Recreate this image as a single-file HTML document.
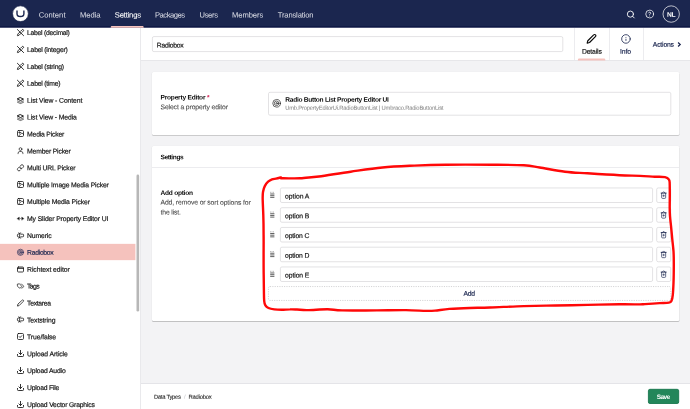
<!DOCTYPE html>
<html lang="en">
<head>
<meta charset="utf-8">
<title>Radiobox - Data Types - Umbraco</title>
<style>
*{box-sizing:border-box;margin:0;padding:0}
html,body{width:690px;height:409px;overflow:hidden;background:#f3f3f5}
body{position:relative;font-family:"Liberation Sans",Arial,sans-serif;font-size:7px;color:#1a1a1a;line-height:1}
.abs,.ic,.t{position:absolute}
.t{white-space:nowrap;line-height:10px;height:10px;filter:opacity(1);transform-origin:0 50%;-webkit-text-stroke:.18px;color:#141414}
.ic{display:block;overflow:visible}
#hdr{left:0;top:0;width:690px;height:28px;background:linear-gradient(#1b264f,#1b264f 26px,#0f1945 26px,#0f1945 27px,#4d5375 27px,#4d5375)}
.nav{color:#d9dbe4;-webkit-text-stroke:.05px}
.nav.on{color:#fff;-webkit-text-stroke:.08px}
#side{left:0;top:27.5px;width:140.5px;height:381.5px;background:#fff}
#sideb{left:140px;top:27.5px;width:1px;height:381.5px;background:#e9e9ec}
.lbl.sel{color:#1b264f}
#ehdr{left:141px;top:27.5px;width:549px;height:33px;background:#fff;border-bottom:1px solid #e7e7ea}
.box{background:#fff;border-radius:1.5px;box-shadow:0 .5px .8px rgba(0,0,0,.25)}
.b{font-weight:700;-webkit-text-stroke:0;color:#0c0c0c}
.d{-webkit-text-stroke:.06px;color:#444}
#ftr{left:141px;top:383px;width:549px;height:26px;background:#fff;border-top:1px solid #e4e4e8}
</style>
</head>
<body>

<div id="hdr" class="abs"></div>
<div class="abs" style="left:0;top:0;width:1px;height:1px;mix-blend-mode:multiply"></div>
<svg class="ic" style="left:11px;top:4px;width:19px;height:19px" viewBox="11 4 19 19"><circle cx="20.450" cy="13.700" r="7.900" fill="#fff" stroke="#121c45" stroke-width=".7"/><path d="M17 10.400v3.300c0 2.100 1 2.800 3.450 2.800s3.450-.700 3.450-2.800v-3.300" fill="none" stroke="#1b264f" stroke-width="1.400"/></svg>
<div class="t nav" style="left:38px;top:10px;font-size:7.6px;letter-spacing:0.032px;transform:translate(0.70px,0.50px) rotate(.03deg)">Content</div>
<div class="t nav" style="left:80px;top:10px;font-size:7.6px;letter-spacing:-0.072px;transform:translate(0.00px,0.50px) rotate(.03deg)">Media</div>
<div class="t nav on" style="left:114px;top:10px;font-size:7.6px;letter-spacing:-0.172px;transform:translate(0.75px,0.50px) rotate(.03deg)">Settings</div>
<div class="t nav" style="left:155px;top:10px;font-size:7.6px;letter-spacing:-0.480px;transform:translate(0.00px,0.50px) rotate(.03deg)">Packages</div>
<div class="t nav" style="left:199px;top:10px;font-size:7.6px;letter-spacing:-0.336px;transform:translate(0.50px,0.50px) rotate(.03deg)">Users</div>
<div class="t nav" style="left:232px;top:10px;font-size:7.6px;letter-spacing:-0.068px;transform:translate(0.00px,0.50px) rotate(.03deg)">Members</div>
<div class="t nav" style="left:277px;top:10px;font-size:7.6px;letter-spacing:-0.155px;transform:translate(0.75px,0.50px) rotate(.03deg)">Translation</div>
<svg class="ic" style="left:109px;top:24px;width:37px;height:5px" viewBox="109 24 37 5"><path d="M110.700 27.800v-.500a1.200 1.200 0 0 1 1.200-1.200h30.600a1.200 1.200 0 0 1 1.200 1.200v.500z" fill="#f7c4be"/></svg>
<svg class="ic" style="left:626px;top:9px;width:11px;height:12px;color:#fff" viewBox="-0.522 -2.348 28.696 31.304" fill="none" stroke="currentColor" stroke-width="2.3" stroke-linecap="round" stroke-linejoin="round"><circle cx="11" cy="11" r="8"/><path d="M21 21l-4.300-4.300"/></svg>
<svg class="ic" style="left:645px;top:9px;width:11px;height:11px;color:#fff" viewBox="0.000 -1.032 28.387 28.387" fill="none" stroke="currentColor" stroke-width="2" stroke-linecap="round" stroke-linejoin="round"><circle cx="12" cy="12" r="10"/><path d="M9.100 9a3 3 0 0 1 5.800 1c0 2-3 3-3 3"/><path d="M12 17h.010"/></svg>
<svg class="ic" style="left:661px;top:4px;width:20px;height:20px" viewBox="661 4 20 20"><circle cx="671.200" cy="14.050" r="8.200" fill="none" stroke="#e4e5ea" stroke-width=".8"/></svg>
<div class="t b" style="left:641px;width:60px;text-align:center;top:9px;font-size:6.7px;letter-spacing:-0.322px;color:#fff;transform:translate(0.09px,0.80px) rotate(.03deg)">NL</div>
<div id="side" class="abs"></div><div id="sideb" class="abs"></div>
<svg class="ic" style="left:16px;top:28px;width:10px;height:10px;color:#111" viewBox="-2.595 -2.919 32.432 32.432" fill="none" stroke="currentColor" stroke-width="2.8" stroke-linecap="round" stroke-linejoin="round"><path d="M10 10l-6.200 6.200a2 2 0 0 0-.500.800l-1.300 4.400a.500.500 0 0 0 .600.600l4.400-1.300a2 2 0 0 0 .800-.500L14 14"/><path d="M12.800 7.200l4.400-4.400a2.800 2.800 0 1 1 4 4l-4.400 4.400"/><path d="M2 2l20 20"/></svg>
<div class="t lbl" style="left:27px;top:28px;font-size:6.8px;letter-spacing:-0.262px;transform:translate(0.05px,0.10px) rotate(.03deg)">Label (decimal)</div>
<svg class="ic" style="left:16px;top:45px;width:10px;height:10px;color:#111" viewBox="-2.595 -2.595 32.432 32.432" fill="none" stroke="currentColor" stroke-width="2.8" stroke-linecap="round" stroke-linejoin="round"><path d="M10 10l-6.200 6.200a2 2 0 0 0-.500.800l-1.300 4.400a.500.500 0 0 0 .600.600l4.400-1.300a2 2 0 0 0 .800-.500L14 14"/><path d="M12.800 7.200l4.400-4.400a2.800 2.800 0 1 1 4 4l-4.400 4.400"/><path d="M2 2l20 20"/></svg>
<div class="t lbl" style="left:27px;top:44px;font-size:6.8px;letter-spacing:-0.223px;transform:translate(0.05px,1.00px) rotate(.03deg)">Label (integer)</div>
<svg class="ic" style="left:16px;top:62px;width:10px;height:10px;color:#111" viewBox="-2.595 -2.270 32.432 32.432" fill="none" stroke="currentColor" stroke-width="2.8" stroke-linecap="round" stroke-linejoin="round"><path d="M10 10l-6.200 6.200a2 2 0 0 0-.500.800l-1.300 4.400a.500.500 0 0 0 .600.600l4.400-1.300a2 2 0 0 0 .800-.500L14 14"/><path d="M12.800 7.200l4.400-4.400a2.800 2.800 0 1 1 4 4l-4.400 4.400"/><path d="M2 2l20 20"/></svg>
<div class="t lbl" style="left:27px;top:61px;font-size:6.8px;letter-spacing:-0.206px;transform:translate(0.05px,0.90px) rotate(.03deg)">Label (string)</div>
<svg class="ic" style="left:16px;top:79px;width:10px;height:9px;color:#111" viewBox="-2.595 -1.946 32.432 29.189" fill="none" stroke="currentColor" stroke-width="2.8" stroke-linecap="round" stroke-linejoin="round"><path d="M10 10l-6.200 6.200a2 2 0 0 0-.500.800l-1.300 4.400a.500.500 0 0 0 .600.600l4.400-1.300a2 2 0 0 0 .800-.500L14 14"/><path d="M12.800 7.200l4.400-4.400a2.800 2.800 0 1 1 4 4l-4.400 4.400"/><path d="M2 2l20 20"/></svg>
<div class="t lbl" style="left:27px;top:78px;font-size:6.8px;letter-spacing:-0.226px;transform:translate(0.05px,0.80px) rotate(.03deg)">Label (time)</div>
<svg class="ic" style="left:17px;top:97px;width:7px;height:7px;color:#111" viewBox="0 0 7 7" fill="none" stroke="currentColor" stroke-width="0.7" stroke-linecap="round" stroke-linejoin="round"><path d="M3.500 .700l3 1.400-3 1.400-3-1.400z" stroke-width=".95"/><path d="M.500 3.900l3 1.250 3-1.250" stroke-width=".6"/><path d="M.500 5.300l3 1.250 3-1.250" stroke-width=".6"/></svg>
<div class="t lbl" style="left:27px;top:95px;font-size:6.8px;letter-spacing:-0.090px;transform:translate(0.05px,0.70px) rotate(.03deg)">List View - Content</div>
<svg class="ic" style="left:17px;top:114px;width:7px;height:7px;color:#111" viewBox="0 0 7 7" fill="none" stroke="currentColor" stroke-width="0.7" stroke-linecap="round" stroke-linejoin="round"><path d="M3.500 .700l3 1.400-3 1.400-3-1.400z" stroke-width=".95"/><path d="M.500 3.900l3 1.250 3-1.250" stroke-width=".6"/><path d="M.500 5.300l3 1.250 3-1.250" stroke-width=".6"/></svg>
<div class="t lbl" style="left:27px;top:112px;font-size:6.8px;letter-spacing:-0.115px;transform:translate(0.05px,0.60px) rotate(.03deg)">List View - Media</div>
<svg class="ic" style="left:17px;top:130px;width:7px;height:7px;color:#111" viewBox="0 0 7 7" fill="none" stroke="currentColor" stroke-width="0.8" stroke-linecap="round" stroke-linejoin="round"><rect x=".5" y=".5" width="6" height="6" rx="1.100"/><circle cx="2.500" cy="2.500" r=".650"/><path d="M6.500 4.500L5.300 3.300a.700.700 0 0 0-1 0L1.400 6.300"/></svg>
<div class="t lbl" style="left:27px;top:129px;font-size:6.8px;letter-spacing:-0.182px;transform:translate(0.05px,0.50px) rotate(.03deg)">Media Picker</div>
<svg class="ic" style="left:17px;top:147px;width:7px;height:7px;color:#111" viewBox="0 0 7 7" fill="none" stroke="currentColor" stroke-width="0.68" stroke-linecap="round" stroke-linejoin="round"><circle cx="3.500" cy="2.100" r="1.400"/><path d="M1.100 6.700v-.500a1.700 1.700 0 0 1 1.700-1.700h1.400a1.700 1.700 0 0 1 1.700 1.700v.500"/></svg>
<div class="t lbl" style="left:27px;top:146px;font-size:6.8px;letter-spacing:-0.167px;transform:translate(0.05px,0.40px) rotate(.03deg)">Member Picker</div>
<svg class="ic" style="left:16px;top:164px;width:10px;height:9px;color:#111" viewBox="-2.595 -0.324 32.432 29.189" fill="none" stroke="currentColor" stroke-width="2.4" stroke-linecap="round" stroke-linejoin="round"><path d="M10 13a5 5 0 0 0 7.540.540l3-3a5 5 0 0 0-7.070-7.070l-1.720 1.710"/><path d="M14 11a5 5 0 0 0-7.540-.540l-3 3a5 5 0 0 0 7.070 7.070l1.710-1.710"/></svg>
<div class="t lbl" style="left:27px;top:163px;font-size:6.8px;letter-spacing:-0.124px;transform:translate(0.05px,0.30px) rotate(.03deg)">Multi URL Picker</div>
<svg class="ic" style="left:17px;top:181px;width:7px;height:7px;color:#111" viewBox="0 0 7 7" fill="none" stroke="currentColor" stroke-width="0.8" stroke-linecap="round" stroke-linejoin="round"><rect x=".5" y=".5" width="6" height="6" rx="1.100"/><circle cx="2.500" cy="2.500" r=".650"/><path d="M6.500 4.500L5.300 3.300a.700.700 0 0 0-1 0L1.400 6.300"/></svg>
<div class="t lbl" style="left:27px;top:180px;font-size:6.8px;letter-spacing:-0.138px;transform:translate(0.05px,0.20px) rotate(.03deg)">Multiple Image Media Picker</div>
<svg class="ic" style="left:17px;top:198px;width:7px;height:7px;color:#111" viewBox="0 0 7 7" fill="none" stroke="currentColor" stroke-width="0.8" stroke-linecap="round" stroke-linejoin="round"><rect x=".5" y=".5" width="6" height="6" rx="1.100"/><circle cx="2.500" cy="2.500" r=".650"/><path d="M6.500 4.500L5.300 3.300a.700.700 0 0 0-1 0L1.400 6.300"/></svg>
<div class="t lbl" style="left:27px;top:197px;font-size:6.8px;letter-spacing:-0.080px;transform:translate(0.05px,0.10px) rotate(.03deg)">Multiple Media Picker</div>
<svg class="ic" style="left:17px;top:215px;width:7px;height:7px;color:#111" viewBox="0 0 7 7" fill="none" stroke="currentColor" stroke-width="0.8" stroke-linecap="round" stroke-linejoin="round"><path d="M.200 3.500l2.100-1.400v2.800z" fill="currentColor" stroke-width=".3"/><path d="M6.800 3.500L4.700 2.100v2.800z" fill="currentColor" stroke-width=".3"/><path d="M2.900 3.500h1.200" stroke-dasharray=".45 .45" stroke-linecap="butt"/></svg>
<div class="t lbl" style="left:27px;top:214px;font-size:6.8px;letter-spacing:-0.109px;transform:translate(0.05px,0.00px) rotate(.03deg)">My Slider Property Editor UI</div>
<svg class="ic" style="left:17px;top:232px;width:7px;height:7px;color:#111" viewBox="0 0 7 7" fill="none" stroke="currentColor" stroke-width="0.75" stroke-linecap="round" stroke-linejoin="round"><path d="M1.400 1h.300a.900.900 0 0 1 .900.900.900.900 0 0 1 .900-.900h.300"/><path d="M3.800 6h-.300a.900.900 0 0 1-.900-.900.900.900 0 0 1-.900.900h-.300"/><path d="M1.400 4.800h-.300a.700.700 0 0 1-.700-.700V2.900a.700.700 0 0 1 .700-.700h.300"/><path d="M3.800 2.200h2.100a.700.700 0 0 1 .700.700v1.200a.700.700 0 0 1-.700.700H3.800"/><path d="M2.600 1.900v3.200"/></svg>
<div class="t lbl" style="left:27px;top:230px;font-size:6.8px;letter-spacing:-0.135px;transform:translate(0.05px,0.90px) rotate(.03deg)">Numeric</div>
<svg class="ic" style="left:0;top:242px;width:136px;height:20px" viewBox="0 242 136 20"><rect x="0" y="243.85" width="135.4" height="16.3" fill="#f5c2bd"/></svg>
<svg class="ic" style="left:16px;top:248px;width:10px;height:9px;color:#2b3159" viewBox="-2.595 -1.946 32.432 29.189" fill="none" stroke="currentColor" stroke-width="2.4" stroke-linecap="round" stroke-linejoin="round"><circle cx="12" cy="12" r="10"/><circle cx="12" cy="12" r="6"/><circle cx="12" cy="12" r="2"/></svg>
<div class="t lbl sel" style="left:27px;top:247px;font-size:6.8px;letter-spacing:-0.288px;transform:translate(0.05px,0.80px) rotate(.03deg)">Radiobox</div>
<svg class="ic" style="left:17px;top:266px;width:7px;height:7px;color:#111" viewBox="0 0 7 7" fill="none" stroke="currentColor" stroke-width="0.8" stroke-linecap="round" stroke-linejoin="round"><rect x=".5" y="1" width="6" height="5" rx=".900"/><path d="M.600 2.200h5.800" stroke-width="1.100"/></svg>
<div class="t lbl" style="left:27px;top:264px;font-size:6.8px;letter-spacing:-0.047px;transform:translate(0.05px,0.70px) rotate(.03deg)">Richtext editor</div>
<svg class="ic" style="left:16px;top:282px;width:10px;height:9px;color:#111" viewBox="-2.595 -1.297 32.432 29.189" fill="none" stroke="currentColor" stroke-width="2.4" stroke-linecap="round" stroke-linejoin="round"><path d="M15 5l6.300 6.300a2.400 2.400 0 0 1 0 3.400L17 19"/><path d="M9.600 5.600A2 2 0 0 0 8.200 5H3a1 1 0 0 0-1 1v5.200a2 2 0 0 0 .600 1.400l5.700 5.700a2.400 2.400 0 0 0 3.400 0l3.600-3.600a2.400 2.400 0 0 0 0-3.400z"/></svg>
<div class="t lbl" style="left:27px;top:281px;font-size:6.8px;letter-spacing:-0.620px;transform:translate(0.05px,0.60px) rotate(.03deg)">Tags</div>
<svg class="ic" style="left:16px;top:299px;width:10px;height:9px;color:#111" viewBox="-2.595 -0.973 32.432 29.189" fill="none" stroke="currentColor" stroke-width="2.4" stroke-linecap="round" stroke-linejoin="round"><path d="M17 3a2.850 2.830 0 1 1 4 4L7.500 20.500 2 22l1.500-5.500z"/></svg>
<div class="t lbl" style="left:27px;top:298px;font-size:6.8px;letter-spacing:-0.297px;transform:translate(0.05px,0.50px) rotate(.03deg)">Textarea</div>
<svg class="ic" style="left:17px;top:316px;width:7px;height:7px;color:#111" viewBox="0 0 7 7" fill="none" stroke="currentColor" stroke-width="0.75" stroke-linecap="round" stroke-linejoin="round"><path d="M1.400 1h.300a.900.900 0 0 1 .900.900.900.900 0 0 1 .900-.900h.300"/><path d="M3.800 6h-.300a.900.900 0 0 1-.900-.900.900.900 0 0 1-.900.900h-.300"/><path d="M1.400 4.800h-.300a.700.700 0 0 1-.700-.700V2.900a.700.700 0 0 1 .700-.700h.300"/><path d="M3.800 2.200h2.100a.700.700 0 0 1 .700.700v1.200a.700.700 0 0 1-.700.700H3.800"/><path d="M2.600 1.900v3.200"/></svg>
<div class="t lbl" style="left:27px;top:315px;font-size:6.8px;letter-spacing:-0.077px;transform:translate(0.05px,0.40px) rotate(.03deg)">Textstring</div>
<svg class="ic" style="left:17px;top:333px;width:7px;height:7px;color:#111" viewBox="0 0 7 7" fill="none" stroke="currentColor" stroke-width="0.8" stroke-linecap="round" stroke-linejoin="round"><rect x=".5" y=".5" width="6" height="6" rx="1.100"/><path d="M2.200 3.600l.900.900 1.700-1.800"/></svg>
<div class="t lbl" style="left:27px;top:332px;font-size:6.8px;letter-spacing:-0.097px;transform:translate(0.05px,0.30px) rotate(.03deg)">True/false</div>
<svg class="ic" style="left:17px;top:350px;width:7px;height:7px;color:#111" viewBox="0 0 7 7" fill="none" stroke="currentColor" stroke-width="0.85" stroke-linecap="round" stroke-linejoin="round"><path d="M.500 4.400v1.300a.800.800 0 0 0 .800.800h4.400a.800.800 0 0 0 .800-.800V4.400"/><path d="M1.900 2.900l1.600 1.600 1.600-1.600"/><path d="M3.500 4.400V.400"/></svg>
<div class="t lbl" style="left:27px;top:349px;font-size:6.8px;letter-spacing:-0.091px;transform:translate(0.05px,0.20px) rotate(.03deg)">Upload Article</div>
<svg class="ic" style="left:17px;top:367px;width:7px;height:7px;color:#111" viewBox="0 0 7 7" fill="none" stroke="currentColor" stroke-width="0.85" stroke-linecap="round" stroke-linejoin="round"><path d="M.500 4.400v1.300a.800.800 0 0 0 .800.800h4.400a.800.800 0 0 0 .800-.800V4.400"/><path d="M1.900 2.900l1.600 1.600 1.600-1.600"/><path d="M3.500 4.400V.400"/></svg>
<div class="t lbl" style="left:27px;top:366px;font-size:6.8px;letter-spacing:-0.158px;transform:translate(0.05px,0.10px) rotate(.03deg)">Upload Audio</div>
<svg class="ic" style="left:17px;top:384px;width:7px;height:7px;color:#111" viewBox="0 0 7 7" fill="none" stroke="currentColor" stroke-width="0.85" stroke-linecap="round" stroke-linejoin="round"><path d="M.500 4.400v1.300a.800.800 0 0 0 .800.800h4.400a.800.800 0 0 0 .800-.800V4.400"/><path d="M1.900 2.900l1.600 1.600 1.600-1.600"/><path d="M3.500 4.400V.400"/></svg>
<div class="t lbl" style="left:27px;top:383px;font-size:6.8px;letter-spacing:-0.219px;transform:translate(0.05px,0.00px) rotate(.03deg)">Upload File</div>
<svg class="ic" style="left:17px;top:401px;width:7px;height:7px;color:#111" viewBox="0 0 7 7" fill="none" stroke="currentColor" stroke-width="0.85" stroke-linecap="round" stroke-linejoin="round"><path d="M.500 4.400v1.300a.800.800 0 0 0 .800.800h4.400a.800.800 0 0 0 .800-.800V4.400"/><path d="M1.900 2.900l1.600 1.600 1.600-1.600"/><path d="M3.500 4.400V.400"/></svg>
<div class="t lbl" style="left:27px;top:399px;font-size:6.8px;letter-spacing:-0.190px;transform:translate(0.05px,0.90px) rotate(.03deg)">Upload Vector Graphics</div>
<svg class="ic" style="left:135px;top:173px;width:6px;height:141px" viewBox="135 173 6 141"><rect x="136.500" y="174.600" width="2.650" height="137" rx="1.300" fill="#b7b7b7"/></svg>
<div id="ehdr" class="abs"></div>
<svg class="ic" style="left:151px;top:35px;width:414px;height:18px" viewBox="151 35 414 18"><rect x="152.40" y="36.60" width="410.40" height="15.00" rx="1.5" fill="#fff" stroke="#d0cfd2" stroke-width="0.6"/></svg>
<div class="t" style="left:156px;top:40px;font-size:6.8px;letter-spacing:-0.274px;transform:translate(0.80px,0.40px) rotate(.03deg)">Radiobox</div>
<div class="abs" style="left:574px;top:27.500px;width:1px;height:32.500px;background:#ececef"></div>
<div class="abs" style="left:609px;top:27.500px;width:1px;height:32.500px;background:#ececef"></div>
<div class="abs" style="left:643px;top:27.500px;width:1px;height:32.500px;background:#ececef"></div>
<svg class="ic" style="left:586px;top:33px;width:12px;height:13px;color:#0a0a0a" viewBox="-0.692 -1.385 27.692 30.000" fill="none" stroke="currentColor" stroke-width="2.7" stroke-linecap="round" stroke-linejoin="round"><path d="M17 3a2.850 2.830 0 1 1 4 4L7.500 20.500 2 22l1.500-5.500z"/></svg>
<div class="t" style="left:561px;width:60px;text-align:center;top:46px;font-size:6.8px;letter-spacing:-0.164px;transform:translate(0.82px,0.65px) rotate(.03deg)">Details</div>
<svg class="ic" style="left:576px;top:56px;width:32px;height:6px" viewBox="576 56 32 6"><path d="M577.900 60.500v-.700a1.200 1.200 0 0 1 1.200-1.200h25a1.200 1.200 0 0 1 1.200 1.200v.700z" fill="#f5c1bc"/></svg>
<svg class="ic" style="left:620px;top:33px;width:13px;height:13px;color:#1b264f" viewBox="-1.864 -1.864 30.291 30.291" fill="none" stroke="currentColor" stroke-width="1.9" stroke-linecap="round" stroke-linejoin="round"><circle cx="12" cy="12" r="10"/><path d="M12 15.500v-3"/><path d="M12 8.500h.010"/></svg>
<div class="t" style="left:595px;width:60px;text-align:center;top:46px;font-size:6.8px;letter-spacing:-0.148px;color:#1b264f;transform:translate(0.48px,0.65px) rotate(.03deg)">Info</div>
<div class="t" style="left:652px;top:39px;font-size:6.8px;letter-spacing:-0.183px;color:#1b264f;transform:translate(0.80px,0.70px) rotate(.03deg)">Actions</div>
<svg class="ic" style="left:676px;top:41px;width:6px;height:8px" viewBox="676 41 6 8" fill="none" stroke="#1b264f" stroke-width="1.250"><path d="M678.100 42.500l2.100 2-2.100 2"/></svg>
<svg class="ic" style="left:149px;top:69px;width:534px;height:70px" viewBox="149 69 534 70"><rect x="151.50" y="71.80" width="528.40" height="64.10" rx="2.0" fill="#000" fill-opacity=".045"/><rect x="152.00" y="72.90" width="527.40" height="62.90" rx="1.5" fill="#000" fill-opacity=".17"/><rect x="152.00" y="72.00" width="527.40" height="62.90" rx="1.5" fill="#fff"/></svg>
<div class="t b" style="left:160px;top:92px;font-size:6.6px;letter-spacing:-0.214px;transform:translate(0.50px,0.50px) rotate(.03deg)">Property Editor <span style="color:#d42054">*</span></div>
<div class="t d" style="left:160px;top:102px;font-size:6.8px;letter-spacing:-0.121px;transform:translate(0.50px,0.30px) rotate(.03deg)">Select a property editor</div>
<svg class="ic" style="left:267px;top:91px;width:406px;height:26px" viewBox="267 91 406 26"><rect x="268.50" y="92.30" width="402.30" height="22.90" rx="1.5" fill="#fff" stroke="#d0cfd2" stroke-width="0.6"/></svg>
<svg class="ic" style="left:272px;top:98px;width:11px;height:11px;color:#1a1a1a" viewBox="0.000 -1.826 28.696 28.696" fill="none" stroke="currentColor" stroke-width="1.7" stroke-linecap="round" stroke-linejoin="round"><circle cx="12" cy="12" r="10"/><circle cx="12" cy="12" r="6"/><circle cx="12" cy="12" r="2"/></svg>
<div class="t b" style="left:285px;top:94px;font-size:6.6px;letter-spacing:-0.277px;transform:translate(0.30px,0.70px) rotate(.03deg)">Radio Button List Property Editor UI</div>
<div class="t d" style="left:285px;top:102px;font-size:5.8px;letter-spacing:-0.187px;color:#8c8c8c;transform:translate(0.20px,0.70px) rotate(.03deg)">Umb.PropertyEditorUi.RadioButtonList | Umbraco.RadioButtonList</div>
<svg class="ic" style="left:149px;top:143px;width:534px;height:182px" viewBox="149 143 534 182"><rect x="151.50" y="145.80" width="528.40" height="176.20" rx="2.0" fill="#000" fill-opacity=".045"/><rect x="152.00" y="146.90" width="527.40" height="175.00" rx="1.5" fill="#000" fill-opacity=".17"/><rect x="152.00" y="146.00" width="527.40" height="175.00" rx="1.5" fill="#fff"/></svg>
<div class="t b" style="left:160px;top:152px;font-size:6.6px;letter-spacing:-0.388px;transform:translate(0.40px,0.30px) rotate(.03deg)">Settings</div>
<div class="abs" style="left:152px;top:167px;width:527.300px;height:1px;background:#ececef"></div>
<div class="t b" style="left:160px;top:187px;font-size:6.6px;letter-spacing:-0.255px;transform:translate(0.50px,0.90px) rotate(.03deg)">Add option</div>
<div class="t d" style="left:160px;top:197px;font-size:6.8px;letter-spacing:-0.104px;transform:translate(0.50px,0.60px) rotate(.03deg)">Add, remove or sort options for</div>
<div class="t d" style="left:160px;top:207px;font-size:6.8px;letter-spacing:-0.131px;transform:translate(0.50px,0.40px) rotate(.03deg)">the list.</div>
<svg class="ic" style="left:270px;top:191px;width:6px;height:7px;color:#333" viewBox="-0.381 -1.810 11.429 13.333" fill="none" stroke="currentColor" stroke-width="1.5" stroke-linejoin="round" stroke-linecap="butt"><path d="M0 .700h8" stroke-dasharray="1.600 1.100" stroke-opacity=".55"/><path d="M0 3.900h8M0 7.100h8M0 10.300h8"/></svg>
<svg class="ic" style="left:279px;top:186px;width:375px;height:18px" viewBox="279 186 375 18"><rect x="280.40" y="187.95" width="372.20" height="14.55" rx="1.5" fill="#fff" stroke="#d0cfd2" stroke-width="0.6"/></svg>
<div class="t" style="left:285px;top:191px;font-size:6.8px;letter-spacing:-0.040px;transform:translate(0.10px,0.40px) rotate(.03deg)">option A</div>
<svg class="ic" style="left:655px;top:186px;width:17px;height:18px" viewBox="655 186 17 18"><rect x="656.70" y="187.95" width="14.00" height="14.55" rx="1.5" fill="#fff" stroke="#d0cfd2" stroke-width="0.6"/></svg>
<svg class="ic" style="left:660px;top:191px;width:9px;height:8px;color:#1b264f" viewBox="-0.150 -0.000 9.000 8.000" fill="none" stroke="currentColor" stroke-width="0.68" stroke-linecap="round" stroke-linejoin="round"><path d="M1 2.100h5" stroke-width=".9"/><path d="M5.500 2.300v4.200a.900.900 0 0 1-.900.900H2.400a.900.900 0 0 1-.900-.900V2.300"/><path d="M2.300 1.900L3.500 .700l1.200 1.200"/><path d="M2.700 4.700h1.600M3.500 3.900v1.600" stroke-width=".6"/></svg>
<svg class="ic" style="left:270px;top:211px;width:6px;height:6px;color:#333" viewBox="-0.381 -1.333 11.429 11.429" fill="none" stroke="currentColor" stroke-width="1.5" stroke-linejoin="round" stroke-linecap="butt"><path d="M0 .700h8" stroke-dasharray="1.600 1.100" stroke-opacity=".55"/><path d="M0 3.900h8M0 7.100h8M0 10.300h8"/></svg>
<svg class="ic" style="left:279px;top:206px;width:375px;height:18px" viewBox="279 206 375 18"><rect x="280.40" y="207.70" width="372.20" height="14.55" rx="1.5" fill="#fff" stroke="#d0cfd2" stroke-width="0.6"/></svg>
<div class="t" style="left:285px;top:211px;font-size:6.8px;letter-spacing:-0.093px;transform:translate(0.10px,0.15px) rotate(.03deg)">option B</div>
<svg class="ic" style="left:655px;top:206px;width:17px;height:18px" viewBox="655 206 17 18"><rect x="656.70" y="207.70" width="14.00" height="14.55" rx="1.5" fill="#fff" stroke="#d0cfd2" stroke-width="0.6"/></svg>
<svg class="ic" style="left:660px;top:210px;width:9px;height:9px;color:#1b264f" viewBox="-0.150 -0.750 9.000 9.000" fill="none" stroke="currentColor" stroke-width="0.68" stroke-linecap="round" stroke-linejoin="round"><path d="M1 2.100h5" stroke-width=".9"/><path d="M5.500 2.300v4.200a.900.900 0 0 1-.900.900H2.400a.900.900 0 0 1-.900-.900V2.300"/><path d="M2.300 1.900L3.500 .700l1.200 1.200"/><path d="M2.700 4.700h1.600M3.500 3.900v1.600" stroke-width=".6"/></svg>
<svg class="ic" style="left:270px;top:231px;width:6px;height:6px;color:#333" viewBox="-0.381 -0.857 11.429 11.429" fill="none" stroke="currentColor" stroke-width="1.5" stroke-linejoin="round" stroke-linecap="butt"><path d="M0 .700h8" stroke-dasharray="1.600 1.100" stroke-opacity=".55"/><path d="M0 3.900h8M0 7.100h8M0 10.300h8"/></svg>
<svg class="ic" style="left:279px;top:226px;width:375px;height:18px" viewBox="279 226 375 18"><rect x="280.40" y="227.45" width="372.20" height="14.55" rx="1.5" fill="#fff" stroke="#d0cfd2" stroke-width="0.6"/></svg>
<div class="t" style="left:285px;top:230px;font-size:6.8px;letter-spacing:-0.147px;transform:translate(0.10px,0.90px) rotate(.03deg)">option C</div>
<svg class="ic" style="left:655px;top:226px;width:17px;height:18px" viewBox="655 226 17 18"><rect x="656.70" y="227.45" width="14.00" height="14.55" rx="1.5" fill="#fff" stroke="#d0cfd2" stroke-width="0.6"/></svg>
<svg class="ic" style="left:660px;top:230px;width:9px;height:9px;color:#1b264f" viewBox="-0.150 -0.500 9.000 9.000" fill="none" stroke="currentColor" stroke-width="0.68" stroke-linecap="round" stroke-linejoin="round"><path d="M1 2.100h5" stroke-width=".9"/><path d="M5.500 2.300v4.200a.900.900 0 0 1-.900.900H2.400a.900.900 0 0 1-.900-.900V2.300"/><path d="M2.300 1.900L3.500 .700l1.200 1.200"/><path d="M2.700 4.700h1.600M3.500 3.900v1.600" stroke-width=".6"/></svg>
<svg class="ic" style="left:270px;top:251px;width:6px;height:6px;color:#333" viewBox="-0.381 -0.381 11.429 11.429" fill="none" stroke="currentColor" stroke-width="1.5" stroke-linejoin="round" stroke-linecap="butt"><path d="M0 .700h8" stroke-dasharray="1.600 1.100" stroke-opacity=".55"/><path d="M0 3.900h8M0 7.100h8M0 10.300h8"/></svg>
<svg class="ic" style="left:279px;top:245px;width:375px;height:19px" viewBox="279 245 375 19"><rect x="280.40" y="247.20" width="372.20" height="14.55" rx="1.5" fill="#fff" stroke="#d0cfd2" stroke-width="0.6"/></svg>
<div class="t" style="left:285px;top:250px;font-size:6.8px;letter-spacing:-0.147px;transform:translate(0.10px,0.65px) rotate(.03deg)">option D</div>
<svg class="ic" style="left:655px;top:245px;width:17px;height:19px" viewBox="655 245 17 19"><rect x="656.70" y="247.20" width="14.00" height="14.55" rx="1.5" fill="#fff" stroke="#d0cfd2" stroke-width="0.6"/></svg>
<svg class="ic" style="left:660px;top:250px;width:9px;height:9px;color:#1b264f" viewBox="-0.150 -0.250 9.000 9.000" fill="none" stroke="currentColor" stroke-width="0.68" stroke-linecap="round" stroke-linejoin="round"><path d="M1 2.100h5" stroke-width=".9"/><path d="M5.500 2.300v4.200a.900.900 0 0 1-.900.900H2.400a.900.900 0 0 1-.900-.900V2.300"/><path d="M2.300 1.900L3.500 .700l1.200 1.200"/><path d="M2.700 4.700h1.600M3.500 3.900v1.600" stroke-width=".6"/></svg>
<svg class="ic" style="left:270px;top:270px;width:6px;height:7px;color:#333" viewBox="-0.381 -1.810 11.429 13.333" fill="none" stroke="currentColor" stroke-width="1.5" stroke-linejoin="round" stroke-linecap="butt"><path d="M0 .700h8" stroke-dasharray="1.600 1.100" stroke-opacity=".55"/><path d="M0 3.900h8M0 7.100h8M0 10.300h8"/></svg>
<svg class="ic" style="left:279px;top:265px;width:375px;height:18px" viewBox="279 265 375 18"><rect x="280.40" y="266.95" width="372.20" height="14.55" rx="1.5" fill="#fff" stroke="#d0cfd2" stroke-width="0.6"/></svg>
<div class="t" style="left:285px;top:270px;font-size:6.8px;letter-spacing:-0.093px;transform:translate(0.10px,0.40px) rotate(.03deg)">option E</div>
<svg class="ic" style="left:655px;top:265px;width:17px;height:18px" viewBox="655 265 17 18"><rect x="656.70" y="266.95" width="14.00" height="14.55" rx="1.5" fill="#fff" stroke="#d0cfd2" stroke-width="0.6"/></svg>
<svg class="ic" style="left:660px;top:270px;width:9px;height:8px;color:#1b264f" viewBox="-0.150 -0.000 9.000 8.000" fill="none" stroke="currentColor" stroke-width="0.68" stroke-linecap="round" stroke-linejoin="round"><path d="M1 2.100h5" stroke-width=".9"/><path d="M5.500 2.300v4.200a.900.900 0 0 1-.900.900H2.400a.900.900 0 0 1-.900-.900V2.300"/><path d="M2.300 1.900L3.500 .700l1.200 1.200"/><path d="M2.700 4.700h1.600M3.500 3.900v1.600" stroke-width=".6"/></svg>
<svg class="ic" style="left:267px;top:285px;width:405px;height:17px" viewBox="267 285 405 17"><rect x="268.45" y="286.55" width="402.30" height="13.90" rx="1.5" fill="#fff" stroke="#a9a9ad" stroke-width="0.5" stroke-dasharray="1.150 1.200"/></svg>
<div class="t" style="left:463px;top:288px;font-size:6.8px;letter-spacing:-0.247px;color:#1b264f;transform:translate(0.50px,0.80px) rotate(.03deg)">Add</div>
<svg class="ic" style="left:0;top:0;width:690px;height:409px" viewBox="0 0 690 409" fill="none" stroke="#ff0808" stroke-width="2.400" stroke-linecap="round" stroke-linejoin="round"><path d="M281 177.4C280.2 177.6 277.5 178.3 276 178.6C274.5 178.9 273.3 178.9 272 179.4C270.7 179.9 269.3 180.6 268.1 181.7C266.9 182.8 265.7 184.4 264.8 186.1C263.9 187.8 263.4 189.7 263 192C262.6 194.3 262.6 196.2 262.7 200C262.8 203.8 263.1 209.2 263.3 215C263.5 220.8 263.6 228.3 263.6 235C263.7 241.7 263.6 248.3 263.6 255C263.6 261.7 263.6 269.2 263.7 275C263.8 280.8 263.8 285.7 263.9 290C264.0 294.3 263.9 298.4 264.2 301C264.4 303.6 264.7 304.2 265.4 305.4C266.1 306.6 267.0 307.3 268.5 308C270.0 308.7 272.1 309.1 274.3 309.4C276.5 309.7 279.1 309.8 281.7 309.8C284.3 309.8 287.4 309.4 290 309.4C292.6 309.3 294.1 309.4 297 309.5C299.9 309.6 302.3 310.2 307.4 310.1C312.5 310.1 321.9 309.1 327.7 309.2C333.5 309.2 333.8 310.2 342 310.4C350.2 310.6 366.3 310.4 377 310.4C387.7 310.3 397.8 310.0 406 310.1C414.2 310.2 421.2 310.8 426 310.9C430.8 311.0 431.1 311.0 435 310.65C438.9 310.3 443.6 309.3 449.4 308.9C455.2 308.5 462.9 308.2 469.7 308C476.5 307.8 481.0 307.8 490 307.5C499.0 307.2 512.8 306.4 523.8 306.1C534.8 305.8 545.1 305.7 555.7 305.5C566.3 305.3 576.9 305.1 587.5 304.9C598.1 304.7 610.6 304.4 619.4 304.3C628.1 304.2 635.8 304.4 640 304.4C644.2 304.4 641.6 304.3 644.9 304.1C648.2 303.9 655.6 303.4 659.6 303.1C663.6 302.9 666.9 303.0 668.9 302.6C670.9 302.2 670.9 302.0 671.5 300.7C672.1 299.4 672.5 297.8 672.8 294.8C673.1 291.9 673.3 288.1 673.5 283C673.7 277.9 673.8 269.2 673.8 263.9C673.8 258.6 673.8 255.4 673.5 251.2C673.2 247.0 672.6 242.7 672.2 238.5C671.8 234.3 671.4 229.5 671 225.8C670.6 222.1 670.2 219.5 670 216.3C669.8 213.1 669.7 210.2 669.7 206.7C669.7 203.1 669.8 198.8 669.8 195C669.8 191.2 669.8 186.6 669.7 184C669.6 181.4 669.8 180.8 669 179.7C668.2 178.5 667.4 177.6 665 177.1C662.6 176.6 658.9 176.9 654.7 176.7C650.5 176.5 645.9 176.1 640 175.85C634.1 175.6 628.1 175.6 619.4 175.2C610.6 174.8 596.6 173.9 587.5 173.3C578.4 172.7 573.0 172.7 565 171.7C557.0 170.7 546.6 168.6 539.7 167.5C532.8 166.4 531.8 165.8 523.8 165.3C515.8 164.8 505.0 164.8 492 164.7C479.0 164.6 458.9 164.5 446 164.7C433.1 164.8 425.0 165.1 414.4 165.6C403.8 166.1 393.1 166.5 382.5 167.5C371.9 168.5 361.3 170.2 350.7 171.7C340.1 173.2 326.4 175.5 319 176.5C311.6 177.5 309.2 177.4 306 177.7C302.8 178.0 302.8 178.1 300 178.2C297.2 178.3 292.2 178.4 289 178.4C285.8 178.4 282.3 178.2 281 178.2"/></svg>
<div id="ftr" class="abs"></div>
<div class="t" style="left:153px;top:391px;font-size:5.9px;letter-spacing:-0.289px;color:#222;-webkit-text-stroke:0.08px;transform:translate(0.90px,0.80px) rotate(.03deg)">Data Types</div>
<div class="t" style="left:184px;top:391px;font-size:5.9px;color:#c4c4c8;-webkit-text-stroke:0px;transform:translate(0.00px,0.80px) rotate(.03deg)">/</div>
<div class="t" style="left:188px;top:391px;font-size:5.9px;letter-spacing:-0.256px;color:#222;-webkit-text-stroke:0.08px;transform:translate(0.60px,0.80px) rotate(.03deg)">Radiobox</div>
<svg class="ic" style="left:647px;top:387px;width:34px;height:18px" viewBox="647 387 34 18"><rect x="648.40" y="389.30" width="30.30" height="14.20" rx="1.5" fill="#23865a" stroke="#0b6f44" stroke-width="0.8"/></svg>
<div class="t b" style="left:633px;width:60px;text-align:center;top:392px;font-size:6.5px;letter-spacing:-0.629px;color:#fff;transform:translate(0.14px,0.10px) rotate(.03deg)">Save</div>
</body>
</html>
